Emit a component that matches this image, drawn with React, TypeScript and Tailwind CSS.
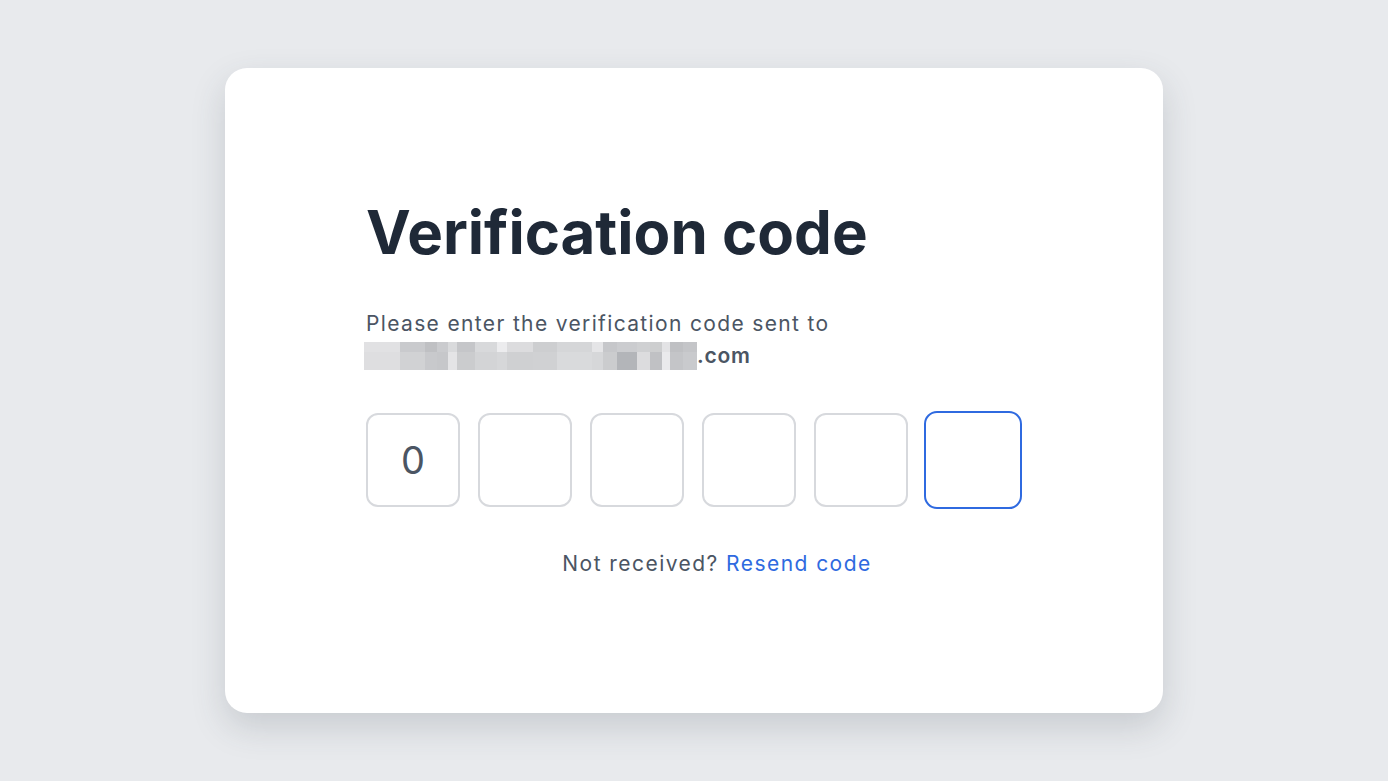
const mosaic: { w: number; top: string; bottom: string }[] = [
  { w: 36, top: '#e1e1e3', bottom: '#dedee0' },
  { w: 25, top: '#c9cacd', bottom: '#d1d2d4' },
  { w: 12, top: '#bfc0c3', bottom: '#c8c9cc' },
  { w: 11, top: '#cacbce', bottom: '#c6c7ca' },
  { w: 9, top: '#d9dadc', bottom: '#e4e4e6' },
  { w: 18, top: '#c5c6c9', bottom: '#cbccce' },
  { w: 22, top: '#d8d9db', bottom: '#d3d4d6' },
  { w: 10, top: '#ececee', bottom: '#d6d7d9' },
  { w: 26, top: '#dcdcde', bottom: '#cfd0d2' },
  { w: 24, top: '#cdced0', bottom: '#d0d1d3' },
  { w: 35, top: '#d5d6d8', bottom: '#d9dadc' },
  { w: 11, top: '#e5e5e7', bottom: '#d6d7d9' },
  { w: 14, top: '#c6c7ca', bottom: '#cbccce' },
  { w: 20, top: '#cbcccf', bottom: '#b3b5b9' },
  { w: 13, top: '#cfd0d2', bottom: '#dcdcde' },
  { w: 12, top: '#cdcecf', bottom: '#c0c1c4' },
  { w: 8, top: '#e3e3e5', bottom: '#eaeaec' },
  { w: 13, top: '#bfc0c3', bottom: '#c4c5c8' },
  { w: 14, top: '#c4c5c8', bottom: '#c9cacd' },
];

const digits = ['0', '', '', '', '', ''];

export default function App() {
  return (
    <div
      className="min-h-screen w-full bg-[#e8eaed] flex justify-center pt-[68px]"
      style={{ fontFamily: 'Inter, "Noto Sans", sans-serif' }}
    >
      <div className="w-[938px] h-[645px] bg-white rounded-[22px] shadow-[0_14px_34px_rgba(55,65,80,0.18)] pl-[141px] pt-[134px]">
        <h1 className="text-[60px] leading-[60px] font-bold text-[#1f2937]">
          Verification code
        </h1>

        <div className="mt-[46px] text-[21px] leading-[32px] tracking-[1.35px] text-[#4b5563]">
          <div>Please enter the verification code sent to</div>
          <div className="flex items-center">
            <div className="flex h-[28px] ml-[-2px]">
              {mosaic.map((m, i) => (
                <div key={i} className="flex flex-col" style={{ width: m.w }}>
                  <div className="h-[10px]" style={{ background: m.top }} />
                  <div className="flex-1" style={{ background: m.bottom }} />
                </div>
              ))}
            </div>
            <span className="font-semibold tracking-[0.8px]">.com</span>
          </div>
        </div>

        <div className="mt-[39px] flex items-center gap-[18px] h-[98px]">
          {digits.map((d, i) =>
            i === 5 ? (
              <div
                key={i}
                className="w-[98px] h-[98px] -ml-[2px] rounded-[13px] border-2 border-[#2f6ae0] bg-white"
              />
            ) : (
              <div
                key={i}
                className="w-[94px] h-[94px] rounded-[12px] border-2 border-[#d7d9dd] bg-white flex items-center justify-center text-[38px] text-[#4b5563]"
              >
                {d}
              </div>
            )
          )}
        </div>

        <div className="mt-[39px] w-[656px] pl-[46px] text-center text-[21px] leading-[32px] tracking-[1.45px] text-[#4b5563]">
          Not received? <span className="text-[#2f6ae0]">Resend code</span>
        </div>
      </div>
    </div>
  );
}
